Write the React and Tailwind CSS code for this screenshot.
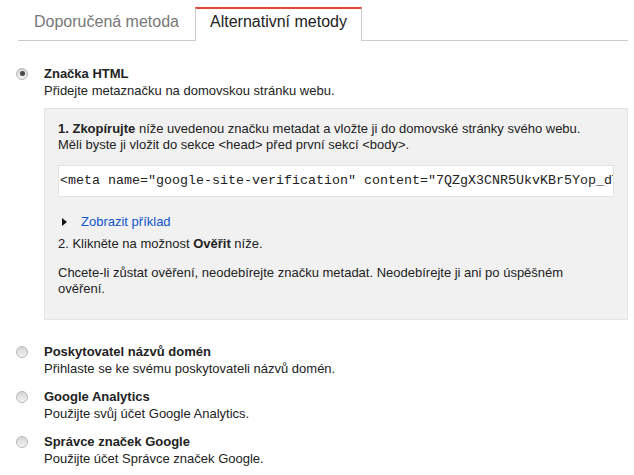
import React from "react";

const Radio = ({ checked }) => (
  <div className="mt-[2.5px] ml-[16px] mr-[16px] flex h-[12px] w-[12px] shrink-0 items-center justify-center rounded-full border border-[#b8b8b8] bg-gradient-to-b from-[#d4d4d4] to-[#f4f4f4]">
    {checked && <div className="h-[5px] w-[5px] rounded-full bg-[#4a4a4a]" />}
  </div>
);

const Option = ({ title, subtitle, checked, children, className = "" }) => (
  <div className={`flex ${className}`}>
    <Radio checked={checked} />
    <div className="min-w-0 flex-1">
      <div className="font-bold leading-[17px]">{title}</div>
      <div className="leading-[17px]">{subtitle}</div>
      {children}
    </div>
  </div>
);

export default function App() {
  return (
    <div className="h-[475px] w-[634px] overflow-hidden bg-white text-[13px] text-[#222] font-['Liberation_Sans',Arial,sans-serif]">
      {/* tabs */}
      <div className="ml-[18px] mr-[6px] flex h-[41px] items-end border-b border-[#ccc]">
        <div className="-mb-px flex h-[34px] w-[177px] justify-center border-t-2 border-transparent pt-1 text-[16px] leading-[18px] text-[#777]">
          Doporučená metoda
        </div>
        <div className="-mb-px flex h-[34px] w-[167px] justify-center border-x border-t-2 border-x-[#ccc] border-t-[#dd4b39] bg-white pt-1 text-[16px] leading-[18px] text-[#222]">
          Alternativní metody
        </div>
      </div>

      <div className="w-[628px] pt-[24px]">
        <Option
          checked
          title="Značka HTML"
          subtitle="Přidejte metaznačku na domovskou stránku webu."
        >
          <div className="mt-[9px] border border-[#e5e5e5] bg-[#f1f1f1] px-[13px] pt-[12px] pb-[22px] leading-[16px]">
            <p>
              <b>1. Zkopírujte</b> níže uvedenou značku metadat a vložte ji do domovské stránky svého webu.
              <br />
              Měli byste ji vložit do sekce &lt;head&gt; před první sekcí &lt;body&gt;.
            </p>
            <div className="mt-[12px] flex h-[32px] items-center overflow-hidden whitespace-nowrap border border-[#e2e2e2] bg-white pl-[1px] font-['Liberation_Mono','Courier_New',monospace] text-[13.33px] text-[#222]">
              &lt;meta name="google-site-verification" content="7QZgX3CNR5UkvKBr5Yop_dT
            </div>
            <div className="mt-[17px] flex items-center">
              <svg width="5" height="8" viewBox="0 0 5 8" className="ml-[4px] mr-[14px]">
                <path d="M0 0 L5 4 L0 8 Z" fill="#111" />
              </svg>
              <span className="text-[#15c]">Zobrazit příklad</span>
            </div>
            <p className="mt-[6px]">
              2. Klikněte na možnost <b>Ověřit</b> níže.
            </p>
            <p className="mt-[13px] pr-[40px]">
              Chcete-li zůstat ověření, neodebírejte značku metadat. Neodebírejte ji ani po úspěšném ověření.
            </p>
          </div>
        </Option>

        <Option
          className="mt-[23px]"
          title="Poskytovatel názvů domén"
          subtitle="Přihlaste se ke svému poskytovateli názvů domén."
        />
        <Option
          className="mt-[11px]"
          title="Google Analytics"
          subtitle="Použijte svůj účet Google Analytics."
        />
        <Option
          className="mt-[11px]"
          title="Správce značek Google"
          subtitle="Použijte účet Správce značek Google."
        />
      </div>
    </div>
  );
}
